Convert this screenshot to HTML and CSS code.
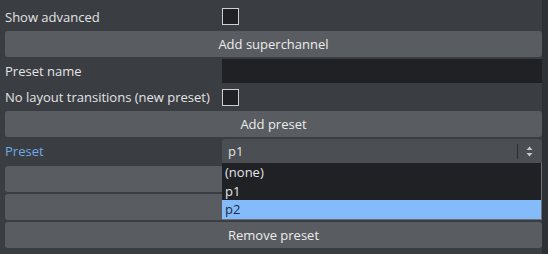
FILE: index.html
```html
<!DOCTYPE html>
<html lang="en">
<head>
    <meta charset="UTF-8">
    <title>Presets</title>
    <link rel="stylesheet" href="styles.css">
</head>
<body>
    <div class="dock">
        <div class="panel">
            <div class="row row-check">
                <span class="label">Show advanced</span>
                <span class="checkbox"></span>
            </div>
            <div class="btn">Add superchannel</div>
            <div class="row row-input">
                <span class="label">Preset name</span>
                <span class="text-input"></span>
            </div>
            <div class="row row-check2">
                <span class="label">No layout transitions (new preset)</span>
                <span class="checkbox"></span>
            </div>
            <div class="btn">Add preset</div>
            <div class="row row-combo">
                <span class="label label-active">Preset</span>
                <div class="combo">
                    <span class="combo-value">p1</span>
                    <span class="combo-sep"></span>
                    <svg class="combo-arrows" width="7" height="11" viewBox="0 0 7 11">
                        <path d="M3.5 0.5 L6.5 4 L0.5 4 Z" fill="#c8c8c8"/>
                        <path d="M3.5 10.5 L6.5 7 L0.5 7 Z" fill="#c8c8c8"/>
                    </svg>
                    <ul class="popup">
                        <li>(none)</li>
                        <li>p1</li>
                        <li class="selected">p2</li>
                    </ul>
                </div>
            </div>
            <!-- these two are covered by the open dropdown -->
            <div class="btn btn-after-combo"></div>
            <div class="btn"></div>
            <div class="btn">Remove preset</div>
        </div>
        <div class="edge"></div>
    </div>
</body>
</html>
```

FILE: styles.css
```css
body {
    margin: 0;
    background-color: #2d3034;
    font-family: "Open Sans", "Liberation Sans", sans-serif;
    font-size: 13px;
    color: #e4e4e4;
}
.dock {
    display: flex;
    height: 254px;
}
.panel {
    width: 537px;
    padding: 0 0 0 5px;
    background-color: #3a3d42;
    display: flex;
    flex-direction: column;
}
.edge {
    flex: 1;
    background-color: #2d3034;
}
.row {
    display: grid;
    grid-template-columns: 217px 1fr;
    align-items: center;
}
.row-check {
    height: 25px;
    margin-top: 4px;
}
.row-input {
    height: 24px;
    margin-top: 2px;
}
.row-check2 {
    height: 22px;
    margin-top: 3px;
}
.row-combo {
    height: 24px;
    margin-top: 2px;
}
.label {
    white-space: nowrap;
}
.label-active {
    color: #6eaae8;
}
.checkbox {
    width: 15px;
    height: 15px;
    border: 1px solid #cfcfcf;
    background-color: #1f2125;
}
.text-input {
    height: 24px;
    background-color: #1f2125;
}
.btn {
    height: 26px;
    margin-top: 2px;
    line-height: 26px;
    text-align: center;
    background-color: #595c60;
    border-radius: 3px;
    color: #ececec;
}
.row-check2 + .btn {
    margin-top: 3px;
}
.btn-after-combo {
    margin-top: 3px;
}
.combo {
    position: relative;
    height: 24px;
    display: flex;
    align-items: center;
    background-color: #4b4e52;
    border-radius: 3px 3px 0 0;
}
.combo-value {
    flex: 1;
    padding-left: 6px;
    color: #e0e0e0;
}
.combo-sep {
    width: 1px;
    height: 15px;
    background-color: #2b2d30;
    margin-right: 8px;
}
.combo-arrows {
    margin-right: 9px;
}
.popup {
    position: absolute;
    top: 24px;
    left: 0;
    right: 0;
    margin: 0;
    padding: 0;
    list-style: none;
    background-color: #1f2125;
    border-right: 1px solid #6c6f73;
    border-bottom: 1px solid #6c6f73;
    z-index: 2;
}
.popup li {
    height: 18.5px;
    line-height: 18px;
    padding-left: 3px;
    color: #e6e6e6;
}
.popup li.selected {
    background-color: #84bcfb;
    color: #1d2a3a;
}
```
